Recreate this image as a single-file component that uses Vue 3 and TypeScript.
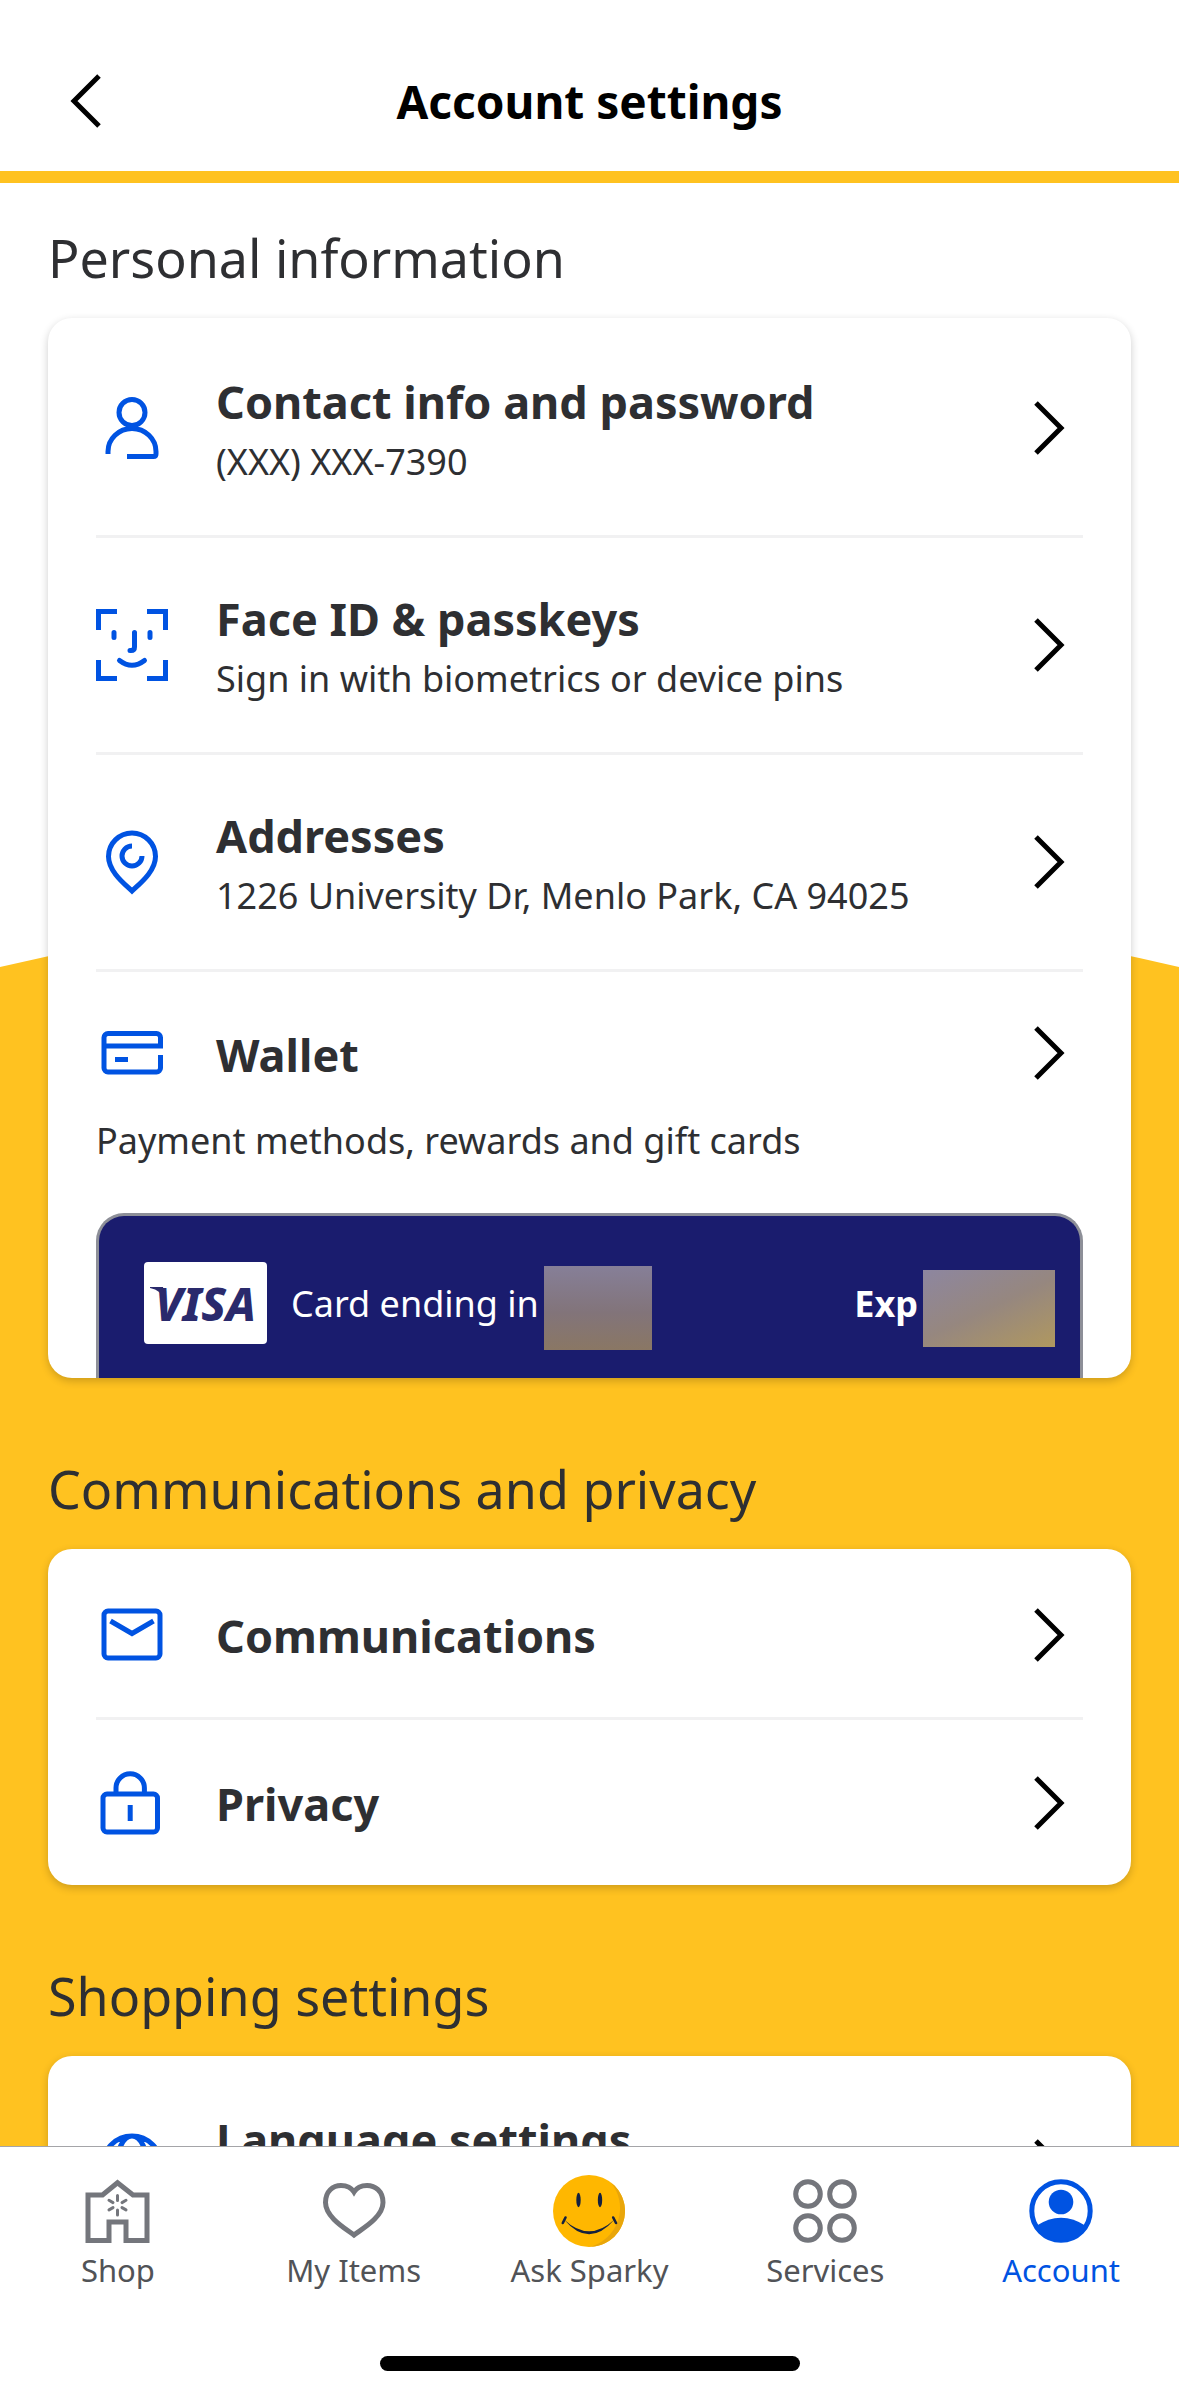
<script setup lang="ts">
interface Row {
  icon: 'person' | 'face' | 'pin' | 'mail' | 'lock' | 'globe'
  title: string
  detail?: string
}

const personalRows: Row[] = [
  { icon: 'person', title: 'Contact info and password', detail: '(XXX) XXX-7390' },
  { icon: 'face', title: 'Face ID & passkeys', detail: 'Sign in with biometrics or device pins' },
  { icon: 'pin', title: 'Addresses', detail: '1226 University Dr, Menlo Park, CA 94025' },
]
const privacyRows: Row[] = [
  { icon: 'mail', title: 'Communications' },
  { icon: 'lock', title: 'Privacy' },
]
const shoppingRows: Row[] = [{ icon: 'globe', title: 'Language settings', detail: '' }]

const iconPaths: Record<Row['icon'], string> = {
  person:
    'M36 7.5a13 13 0 1 1 0 26a13 13 0 1 1 0-26Z M12 62V59.5a24 23 0 0 1 48 0V62q0 2.500-2.500 2.500H31',
  face:
    'M2.500 21V2.500H21 M51 2.500H69.500V21 M69.500 51V69.500H51 M21 69.500H2.500V51',
  pin:
    'M36 65C30 59 12.500 46 12.500 30.500a23.500 23.500 0 0 1 47 0C59.500 46 42 59 36 65Z M36 20a10 10 0 1 0 10 10',
  mail:
    'M12 12H60a4 4 0 0 1 4 4V55a4 4 0 0 1-4 4H12a4 4 0 0 1-4-4V16a4 4 0 0 1 4-4Z M14.500 22L36 34.500L57.500 22',
  lock:
    'M11 27H57.500a4 4 0 0 1 4 4V61a4 4 0 0 1-4 4H11a4 4 0 0 1-4-4V31a4 4 0 0 1 4-4Z M20 27V21a14.200 14.200 0 0 1 28.400 0V27 M34.200 38V54',
  globe:
    'M36 6a29 29 0 1 1 0 58a29 29 0 1 1 0-58Z M36 6a15 29 0 1 1 0 58a15 29 0 1 1 0-58Z M11 25H61 M11 46H61',
}

const sections = [
  { id: 'personal', heading: 'Personal information', rows: personalRows, wallet: true },
  { id: 'privacy', heading: 'Communications and privacy', rows: privacyRows, wallet: false },
  { id: 'shopping', heading: 'Shopping settings', rows: shoppingRows, wallet: false },
]

const tabs = [
  { id: 'shop', label: 'Shop' },
  { id: 'items', label: 'My Items' },
  { id: 'sparky', label: 'Ask Sparky' },
  { id: 'services', label: 'Services' },
  { id: 'account', label: 'Account' },
]
</script>

<template>
  <div class="app">
    <header class="header">
      <button class="back" type="button" aria-label="Back">
        <svg class="icon" viewBox="0 0 72 72"><path d="M51 11L26 36L51 61" /></svg>
      </button>
      <h1 class="title">Account settings</h1>
    </header>

    <main class="content">
      <div class="backdrop" aria-hidden="true">
        <svg class="wave" viewBox="0 0 1179 70" preserveAspectRatio="none">
          <path d="M0 70Q589.500-70 1179 70Z" />
        </svg>
        <div class="fill"></div>
      </div>

      <section v-for="section in sections" :key="section.id" class="section">
        <h2 class="heading">{{ section.heading }}</h2>
        <div class="card">
          <a
            v-for="row in section.rows"
            :key="row.title"
            href="#"
            class="row"
            :class="{ tall: row.detail !== undefined }"
          >
            <svg class="icon blue" viewBox="0 0 72 72" aria-hidden="true">
              <path :d="iconPaths[row.icon]" />
              <path
                v-if="row.icon === 'face'"
                class="round"
                d="M18 23.500V28.500 M54 23.500V28.500 M38.500 23.500V38q0 3.500-3.500 3.500H34 M23.500 51.500Q36 61 48.500 51.500"
              />
            </svg>
            <span class="text">
              <span class="name">{{ row.title }}</span>
              <span v-if="row.detail !== undefined" class="detail">{{ row.detail }}</span>
            </span>
            <svg class="icon" viewBox="0 0 72 72" aria-hidden="true"><path d="M25 11L50 36L25 61" /></svg>
          </a>

          <a v-if="section.wallet" href="#" class="wallet">
            <span class="wallet-head">
              <svg class="icon blue" viewBox="0 0 72 72" aria-hidden="true">
                <path
                  d="M64.500 38V51a4 4 0 0 1-4 4H12a4 4 0 0 1-4-4V20.500a4 4 0 0 1 4-4H60.500a4 4 0 0 1 4 4V29H8 M19 42.500H32"
                />
              </svg>
              <span class="text"><span class="name">Wallet</span></span>
              <svg class="icon" viewBox="0 0 72 72" aria-hidden="true"><path d="M25 11L50 36L25 61" /></svg>
            </span>
            <span class="wallet-note">Payment methods, rewards and gift cards</span>
            <span class="pay-card">
              <span class="visa">
                <svg class="swoosh" viewBox="0 0 16 14" aria-hidden="true"><path d="M0 0H13L16 14Q11 3 0 1Z" /></svg>
                VISA
              </span>
              <span class="ending">Card ending in</span>
              <span class="mask mask-number"></span>
              <span class="exp">Exp</span>
              <span class="mask mask-date"></span>
            </span>
          </a>
        </div>
      </section>
    </main>

    <nav class="tabbar">
      <div class="tabs">
        <a v-for="tab in tabs" :key="tab.id" href="#" class="tab" :class="{ active: tab.id === 'account' }">
          <svg v-if="tab.id === 'shop'" class="tab-icon" viewBox="0 0 72 72" aria-hidden="true">
            <path d="M6 65.500V20H20.500L35.500 7.800L51 20H65V65.500H44V47H27V65.500Z" />
            <path
              class="spark"
              d="M35.500 25.500V20.500 M35.500 35V40 M31 27.600L27 25.300 M31 32.600L27 34.900 M40 27.600L44 25.300 M40 32.600L44 34.900"
            />
          </svg>
          <svg v-else-if="tab.id === 'items'" class="tab-icon" viewBox="0 0 72 72" aria-hidden="true">
            <path
              d="M36 60C30 55 7.500 43 7.500 27.500C7.500 16 15 10.500 23 10.500C29 10.500 33.500 13 36 17C38.500 13 43 10.500 49 10.500C57 10.500 65 16 65 27.500C65 43 42 55 36 60Z"
            />
          </svg>
          <svg v-else-if="tab.id === 'sparky'" class="sparky" viewBox="0 0 72 72" aria-hidden="true">
            <circle cx="36" cy="36" r="36" fill="#ffb700" />
            <path d="M57.600 7.200A36 36 0 0 1 36 72A40 40 0 0 0 57.600 7.200Z" fill="#e9a60a" />
            <ellipse cx="25.500" cy="25" rx="2.200" ry="7.200" fill="#14213f" />
            <ellipse cx="47" cy="25" rx="2.200" ry="7.200" fill="#14213f" />
            <path d="M11 44.500Q36 68 61.500 44.500Q36 74 11 44.500Z" fill="#14213f" />
            <path d="M9.800 48L12.500 42.500 M63 48L60.200 42.500" fill="none" stroke="#14213f" stroke-width="2.600" stroke-linecap="round" />
          </svg>
          <svg v-else-if="tab.id === 'services'" class="tab-icon" viewBox="0 0 72 72" aria-hidden="true">
            <circle cx="19" cy="19" r="12.300" />
            <circle cx="53" cy="19" r="12.300" />
            <circle cx="19" cy="53" r="12.300" />
            <circle cx="53" cy="53" r="12.300" />
          </svg>
          <svg v-else class="tab-icon" viewBox="0 0 72 72" aria-hidden="true">
            <circle cx="36" cy="36" r="29.200" />
            <circle class="solid" cx="36" cy="27" r="12.300" />
            <path class="solid" d="M11 51Q36 34.500 61 51A29 29 0 0 1 11 51Z" />
          </svg>
          <span class="tab-label">{{ tab.label }}</span>
        </a>
      </div>
      <div class="home-indicator"></div>
    </nav>
  </div>
</template>

<style>
body {
  margin: 0;
  background: #fff;
}
</style>

<style scoped>
.app {
  display: flex;
  flex-direction: column;
  height: 100vh;
  background: #fff;
  color: #2e2f32;
  font-family: "Noto Sans", "Open Sans", sans-serif;
}

a {
  color: inherit;
  text-decoration: none;
}

.header {
  display: grid;
  grid-template-columns: 1fr auto 1fr;
  align-items: center;
  padding: 59px 48px 28px;
  border-bottom: 12px solid #ffc220;
  color: #000;
}

.back {
  display: flex;
  justify-self: start;
  padding: 0;
  border: 0;
  background: none;
  color: inherit;
}

.title {
  margin: 0;
  font-size: 46px;
  line-height: 84px;
  font-weight: 700;
}

.icon {
  display: block;
  flex: none;
  width: 72px;
  height: 72px;
  fill: none;
  stroke: #000;
  stroke-width: 5;
}

.icon.blue {
  stroke: #0053e2;
}

.round {
  stroke-linecap: round;
}

.content {
  position: relative;
  z-index: 0;
  flex: 1;
  min-height: 0;
  overflow: hidden;
}

.backdrop {
  position: absolute;
  inset: 0;
  z-index: -1;
  display: flex;
  flex-direction: column;
  padding-top: 714px;
}

.wave {
  display: block;
  width: 100%;
  height: 70px;
  fill: #ffc220;
}

.fill {
  flex: 1;
  background: #ffc220;
}

.section {
  padding: 39px 48px 36px;
}

.heading {
  margin: 0 0 24px;
  font-size: 52px;
  line-height: 72px;
  font-weight: 400;
}

.card {
  overflow: hidden;
  border-radius: 24px;
  background: #fff;
  box-shadow: 0 3px 9px rgba(0, 0, 0, 0.2);
  padding: 0 48px;
}

.row {
  display: flex;
  align-items: center;
  gap: 48px;
  min-height: 165px;
  border-top: 3px solid #f1f1f2;
}

.row.tall {
  min-height: 214px;
}

.row:first-child {
  border-top-color: transparent;
}

.text {
  display: flex;
  flex: 1;
  flex-direction: column;
  padding-top: 3px;
}

.tall .text {
  padding-top: 6px;
}

.name {
  font-size: 45px;
  line-height: 62px;
  font-weight: 700;
}

.detail {
  min-height: 58px;
  font-size: 36px;
  line-height: 58px;
}

.wallet {
  display: flex;
  flex-direction: column;
  padding-top: 45px;
  border-top: 3px solid #f1f1f2;
}

.wallet-head {
  display: flex;
  align-items: center;
  gap: 48px;
}

.wallet-note {
  margin: 24px 0 44px;
  font-size: 36px;
  line-height: 56px;
}

.pay-card {
  display: flex;
  align-items: center;
  padding: 40px 25px 28px 45px;
  border: 3px solid #8d8f98;
  border-bottom: 0;
  border-radius: 28px 28px 0 0;
  background: #1a1c6e;
  color: #fff;
  font-size: 36px;
}

.visa {
  position: relative;
  width: 123px;
  margin-right: 24px;
  border-radius: 4px;
  background: #fff;
  color: #2a2a6c;
  font-size: 46px;
  line-height: 82px;
  font-style: italic;
  font-weight: 800;
  text-align: center;
}

.swoosh {
  position: absolute;
  left: 6px;
  top: 25px;
  width: 16px;
  height: 14px;
  fill: #2a2a6c;
}

.mask {
  margin: 10px 0 0 5px;
}

.mask-number {
  width: 108px;
  height: 84px;
  background: linear-gradient(#867f98, #82747a 55%, #8a7764);
}

.exp {
  margin-left: auto;
  font-weight: 700;
}

.mask-date {
  width: 132px;
  height: 77px;
  background: linear-gradient(155deg, #8d86a0, #96877f 50%, #b0985f);
}

.tabbar {
  flex: none;
  padding: 28px 0 25px;
  border-top: 1px solid #a5a5a8;
  background: #fff;
}

.tabs {
  display: grid;
  grid-template-columns: repeat(5, 1fr);
}

.tab {
  display: flex;
  flex-direction: column;
  align-items: center;
  gap: 2px;
  color: #515357;
}

.tab.active {
  color: #0053e2;
}

.tab-icon,
.sparky {
  display: block;
  width: 72px;
  height: 72px;
}

.tab-icon {
  fill: none;
  stroke: #74767c;
  stroke-width: 5;
}

.active .tab-icon {
  stroke: #0053e2;
}

.tab-icon .spark {
  stroke-width: 3;
  stroke-linecap: round;
}

.tab-icon .solid {
  fill: #0053e2;
  stroke: none;
}

.tab-label {
  font-size: 31px;
  line-height: 42px;
}

.home-indicator {
  width: 420px;
  height: 15px;
  margin: 65px auto 0;
  border-radius: 8px;
  background: #000;
}
</style>
